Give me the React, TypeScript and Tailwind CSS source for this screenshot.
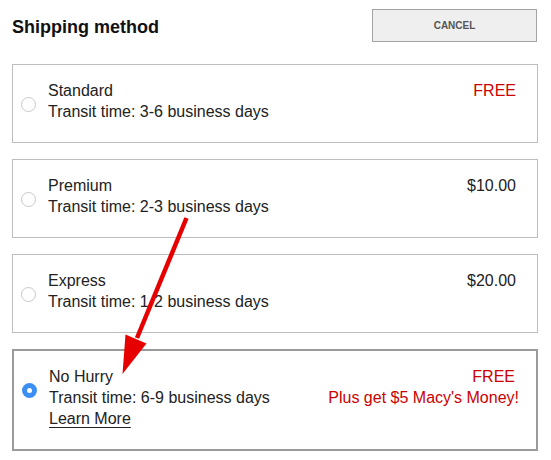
import React from "react";

interface ShippingOption {
  name: string;
  transit: string;
  price: string;
  free?: boolean;
  extra?: string;
  selected?: boolean;
  learnMore?: boolean;
}

const options: ShippingOption[] = [
  { name: "Standard", transit: "Transit time: 3-6 business days", price: "FREE", free: true },
  { name: "Premium", transit: "Transit time: 2-3 business days", price: "$10.00" },
  { name: "Express", transit: "Transit time: 1-2 business days", price: "$20.00" },
  {
    name: "No Hurry",
    transit: "Transit time: 6-9 business days",
    price: "FREE",
    free: true,
    extra: "Plus get $5 Macy's Money!",
    selected: true,
    learnMore: true,
  },
];

function Radio({ checked }: { checked?: boolean }) {
  if (checked) {
    return (
      <span className="mt-[17px] flex h-[15px] w-[15px] shrink-0 items-center justify-center rounded-full bg-[#3b8ff3]">
        <span className="h-[5px] w-[5px] rounded-full bg-white" />
      </span>
    );
  }
  return (
    <span className="mt-[17px] h-[15px] w-[15px] shrink-0 rounded-full border border-[#c9c9c9] bg-white" />
  );
}

function OptionCard({ option }: { option: ShippingOption }) {
  return (
    <div
      className={
        option.selected
          ? "flex gap-[12px] border-2 border-[#9a9a9a] bg-white pb-[20px] pl-[8px] pr-[17px] pt-[15px]"
          : "flex gap-[12px] border border-[#bdbdbd] bg-white pb-[20px] pl-[8px] pr-[17px] pt-[15px]"
      }
    >
      <Radio checked={option.selected} />
      <div className="flex flex-1 justify-between text-[16px] leading-[21px]">
        <div className="text-[#222]">
          <div>{option.name}</div>
          <div>{option.transit}</div>
          {option.learnMore && (
            <a href="#" className="underline decoration-1 underline-offset-[3px]">
              Learn More
            </a>
          )}
        </div>
        <div className="text-right">
          <div className={option.free ? "pr-[4px] text-[#cc0000]" : "pr-[4px] text-[#222]"}>
            {option.price}
          </div>
          {option.extra && <div className="text-[#cc0000]">{option.extra}</div>}
        </div>
      </div>
    </div>
  );
}

export default function App() {
  return (
    <div className="relative h-[460px] w-[551px] bg-white font-['Liberation_Sans',Arial,sans-serif]">
      <div className="ml-[12px] w-[526px] pt-[9px]">
        <div className="flex items-start justify-between">
          <h2 className="mt-[7px] text-[18px] font-bold leading-[22px] text-[#111]">
            Shipping method
          </h2>
          <button className="mr-[1px] h-[33px] w-[165px] border border-[#a3a3a3] bg-[#efefef] text-[10px] font-bold text-[#555]">
            CANCEL
          </button>
        </div>
        <div className="mt-[22px] flex flex-col gap-[16px]">
          {options.map((o) => (
            <OptionCard key={o.name} option={o} />
          ))}
        </div>
      </div>
      <svg
        className="pointer-events-none absolute left-0 top-0"
        width="551"
        height="460"
        viewBox="0 0 551 460"
      >
        <line x1="186.5" y1="218" x2="137" y2="338" stroke="#e60000" strokeWidth="4.5" />
        <polygon points="125.5,334.5 146.5,343.5 122.5,374" fill="#e60000" />
      </svg>
    </div>
  );
}
